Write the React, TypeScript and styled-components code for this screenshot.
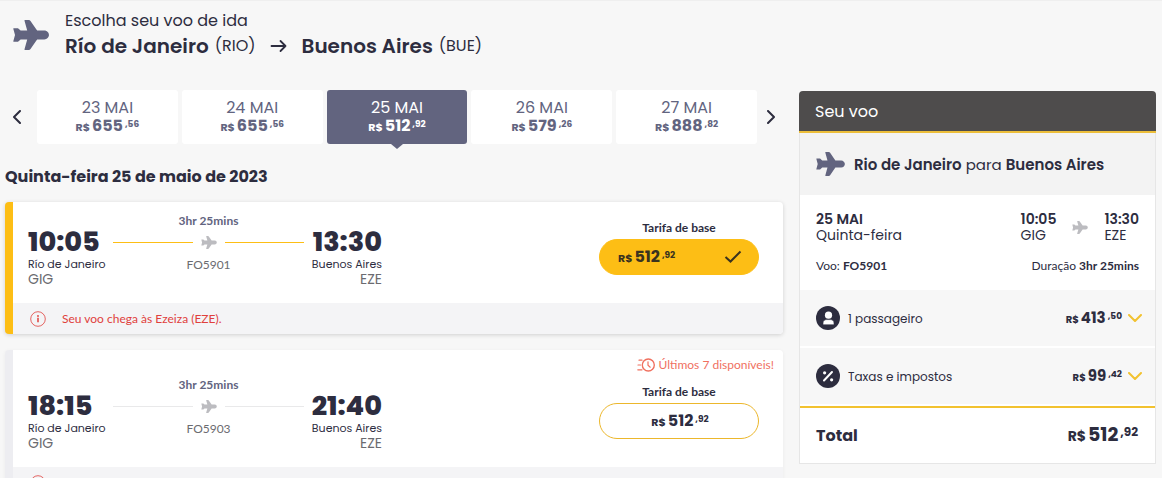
import React from "react";
import styled, { createGlobalStyle, css } from "styled-components";

const color = {
  ink: "#2d2d3f",
  slate: "#62647f",
  grey: "#6b6b70",
  yellow: "#fdbe15",
  red: "#e0403c",
  coral: "#f0705f",
  page: "#f7f7f7",
};

const display = `Poppins, Inter, "Liberation Sans", sans-serif`;
const body = `Lato, "Liberation Sans", sans-serif`;

const GlobalStyle = createGlobalStyle`
  *, *::before, *::after { box-sizing: border-box; }
  html { scrollbar-width: none; }
  body {
    margin: 0;
    background: ${color.page};
    color: ${color.ink};
    font-family: ${display};
  }
  h1, h2, h3, p { margin: 0; }
  button { font-family: inherit; color: inherit; cursor: pointer; border: 0; padding: 0; background: none; }
`;

/* ---------- icons ---------- */

const PlaneIcon = ({ width, fill = color.slate }: { width: number; fill?: string }) => (
  <svg width={width} height={Math.round((width * 91) / 109)} viewBox="0 0 109 91" fill={fill} aria-hidden="true">
    <path d="M36 0H48Q51 0 53 3L73 32H95C103 32 109 39 109 45.500C109 52 103 59 95 59H73L53 88Q51 91 48 91H36Q34 91 35 88L43 59H23L15 66H2Q0 66 1 64L6 45.500L1 27Q0 25 2 25H15L23 32H43L35 3Q34 0 36 0Z" />
  </svg>
);

const ArrowIcon = () => (
  <svg width="17" height="14" viewBox="0 0 17 14" fill="none" stroke={color.ink} strokeWidth="1.800" strokeLinecap="round" strokeLinejoin="round" aria-hidden="true">
    <path d="M1.500 7H15.500M10.500 2L15.500 7L10.500 12" />
  </svg>
);

const ChevronIcon = ({ d, w, h, stroke = color.ink }: { d: string; w: number; h: number; stroke?: string }) => (
  <svg width={w} height={h} viewBox={`0 0 ${w} ${h}`} fill="none" stroke={stroke} strokeWidth="2" strokeLinecap="round" strokeLinejoin="round" aria-hidden="true">
    <path d={d} />
  </svg>
);

const CheckIcon = () => (
  <svg width="18" height="14" viewBox="0 0 18 14" fill="none" stroke="#3a331f" strokeWidth="2" aria-hidden="true">
    <path d="M1.500 7L6.500 11.500L16.500 1.500" />
  </svg>
);

const InfoIcon = () => (
  <svg width="16" height="16" viewBox="0 0 16 16" fill="none" stroke={color.red} aria-hidden="true">
    <circle cx="8" cy="8" r="7.300" strokeWidth="0.800" />
    <path d="M8 6.800V11.200" strokeWidth="1.500" />
    <circle cx="8" cy="5" r="0.900" fill={color.red} stroke="none" />
  </svg>
);

const FastClockIcon = () => (
  <svg width="18" height="14" viewBox="0 0 18 14" fill="none" stroke={color.coral} strokeWidth="1.400" strokeLinecap="round" aria-hidden="true">
    <circle cx="11.300" cy="7" r="6" />
    <path d="M11 3.800V7.300L13.200 9.200M2 2.200H5M1 7H3.500M0.800 11.800H5" strokeWidth="1.200" />
  </svg>
);

const PassengerIcon = () => (
  <svg width="24" height="24" viewBox="0 0 24 24" aria-hidden="true">
    <circle cx="12" cy="12" r="12" fill={color.ink} />
    <circle cx="12.500" cy="9.200" r="3.600" fill="#fff" />
    <path d="M7 18.800V17C7 14.800 8.500 13.600 10.500 13.600H14.500C16.500 13.600 18 14.800 18 17V18.800Z" fill="#fff" stroke={color.ink} strokeWidth="0.600" />
  </svg>
);

const PercentIcon = () => (
  <svg width="24" height="24" viewBox="0 0 24 24" aria-hidden="true">
    <circle cx="12" cy="12" r="12" fill={color.ink} />
    <path d="M8 16.500L16 8" stroke="#fff" strokeWidth="2" strokeLinecap="round" />
    <circle cx="8.600" cy="8.800" r="1.600" fill="#fff" />
    <circle cx="15.600" cy="15.800" r="1.600" fill="#fff" />
  </svg>
);

/* ---------- price ---------- */

type PriceSize = "small" | "medium" | "large";

const priceScale = {
  small: { whole: 15, currency: 10, cents: 9, line: 18, centsLine: 14, top: 2 },
  medium: { whole: 16, currency: 11, cents: 9, line: 18, centsLine: 14, top: 0 },
  large: { whole: 19, currency: 14, cents: 12, line: 24, centsLine: 18, top: 0 },
};

const PriceBox = styled.span<{ $size: PriceSize }>`
  display: inline-flex;
  align-items: baseline;
  gap: 2px;
  padding-top: ${(p) => priceScale[p.$size].top}px;
  font-weight: 700;
  white-space: nowrap;
  font-size: ${(p) => priceScale[p.$size].whole}px;
  line-height: ${(p) => priceScale[p.$size].line}px;
`;

const Currency = styled.small<{ $size: PriceSize }>`
  font-size: ${(p) => priceScale[p.$size].currency}px;
`;

const Cents = styled.small<{ $size: PriceSize }>`
  align-self: flex-start;
  font-size: ${(p) => priceScale[p.$size].cents}px;
  line-height: ${(p) => priceScale[p.$size].centsLine}px;
`;

const Price = ({ whole, cents, size = "medium" }: { whole: string; cents: string; size?: PriceSize }) => (
  <PriceBox $size={size}>
    <Currency $size={size}>R$</Currency>
    <span>{whole}</span>
    <Cents $size={size}>,{cents}</Cents>
  </PriceBox>
);

/* ---------- page header ---------- */

const Page = styled.div`
  border-top: 1px solid #efefef;
  padding: 0 6px 0 5px;
`;

const Header = styled.header`
  display: flex;
  align-items: flex-start;
  gap: 16px;
  padding: 8px 0 31px 8px;

  > svg { margin-top: 11px; }
`;

const Eyebrow = styled.p`
  font-size: 16px;
  line-height: 24px;
`;

const RouteTitle = styled.h1`
  display: flex;
  align-items: center;
  font-size: 20px;
  font-weight: 600;
  line-height: 26px;

  svg { margin: 0 15px 0 14px; }
`;

const AirportCode = styled.span`
  margin-left: 6px;
  font-size: 16px;
  font-weight: 400;
`;

const Columns = styled.div`
  display: flex;
  align-items: flex-start;
  gap: 16px;
`;

const Results = styled.main`
  flex: 1;
  min-width: 0;
`;

/* ---------- date strip ---------- */

const DateStrip = styled.nav`
  display: flex;
  align-items: center;
`;

const StripArrow = styled.button`
  display: flex;
  align-items: center;
  justify-content: center;
  width: 24px;
  height: 52px;
`;

const DateList = styled.div`
  flex: 1;
  display: grid;
  grid-template-columns: repeat(5, 1fr);
  gap: 4px;
  margin: 0 2px 0 8px;
`;

const DateCard = styled.button<{ $active?: boolean }>`
  position: relative;
  display: flex;
  flex-direction: column;
  align-items: center;
  padding: 9px 0 8px;
  border-radius: 3px;
  background: #fff;
  color: ${color.slate};

  ${(p) =>
    p.$active &&
    css`
      background: ${color.slate};
      color: #fff;

      &::after {
        content: "";
        position: absolute;
        top: 100%;
        left: 50%;
        margin-left: -6px;
        border: 6px solid transparent;
        border-top: 5px solid ${color.slate};
        border-bottom: 0;
      }
    `}
`;

const DateLabel = styled.span`
  font-size: 16px;
  line-height: 18px;
`;

const DayHeading = styled.h2`
  padding: 21px 0 13px;
  font-size: 16px;
  font-weight: 700;
  line-height: 24px;
`;

/* ---------- flight card ---------- */

const Card = styled.article<{ $selected?: boolean }>`
  margin-bottom: 16px;
  overflow: hidden;
  border-left: 8px solid ${(p) => (p.$selected ? color.yellow : "#ededf1")};
  border-radius: 4px;
  background: #fff;
  box-shadow: 0 1px 4px rgba(0, 0, 0, ${(p) => (p.$selected ? 0.16 : 0.05)});
`;

const SeatsLeft = styled.p`
  display: flex;
  align-items: center;
  justify-content: flex-end;
  gap: 4px;
  padding: 7px 9px 0 0;
  color: ${color.coral};
  font-family: ${body};
  font-size: 12px;
  line-height: 16px;
`;

const CardBody = styled.div<{ $badge?: boolean }>`
  display: flex;
  align-items: flex-start;
  justify-content: space-between;
  padding: ${(p) => (p.$badge ? 4 : 11)}px 24px 18px 15px;
`;

const Itinerary = styled.div`
  display: grid;
  grid-template-columns: 77px 191px 70px;
  gap: 8px;
`;

const Stop = styled.div<{ $end?: boolean }>`
  display: flex;
  flex-direction: column;
  align-items: ${(p) => (p.$end ? "flex-end" : "flex-start")};
  padding-top: 16px;
  white-space: nowrap;
`;

const StopTime = styled.strong`
  font-size: 27px;
  font-weight: 800;
  line-height: 26px;
`;

const StopCity = styled.span`
  font-size: 11px;
  line-height: 18px;
`;

const StopCode = styled.span`
  color: ${color.grey};
  font-size: 14px;
  line-height: 12px;
`;

const Leg = styled.div`
  display: flex;
  flex-direction: column;
  font-family: ${body};
  text-align: center;
`;

const Duration = styled.strong`
  color: ${color.slate};
  font-size: 12px;
  line-height: 16px;
`;

const LegLine = styled.div<{ $selected?: boolean }>`
  display: flex;
  align-items: center;
  gap: 8px;
  height: 26px;

  &::before,
  &::after {
    content: "";
    flex: 1;
    height: 1px;
    background: ${(p) => (p.$selected ? color.yellow : "#e9e9ea")};
  }
`;

const FlightNumber = styled.span`
  color: ${color.grey};
  font-size: 12px;
  line-height: 20px;
`;

const Fare = styled.div`
  display: flex;
  flex-direction: column;
  gap: 3px;
  width: 160px;
  padding-top: 7px;
`;

const FareLabel = styled.span`
  font-family: ${body};
  font-size: 12px;
  font-weight: 700;
  line-height: 16px;
  text-align: center;
`;

const FareButton = styled.button<{ $selected?: boolean }>`
  display: flex;
  align-items: center;
  justify-content: ${(p) => (p.$selected ? "space-between" : "center")};
  height: 36px;
  padding: 0 16px 0 18px;
  border: 1px solid #ecb72c;
  border-radius: 18px;

  ${(p) =>
    p.$selected &&
    css`
      border-color: ${color.yellow};
      background: ${color.yellow};
      color: #3a331f;
    `}
`;

const Notice = styled.p`
  display: flex;
  align-items: center;
  gap: 16px;
  padding: 8px 17px 7px;
  background: #f4f4f6;
  color: ${color.red};
  font-family: ${body};
  font-size: 12px;
  line-height: 16px;
`;

type Flight = {
  departs: string;
  arrives: string;
  number: string;
  selected?: boolean;
  seats?: string;
};

const FlightCard = ({ departs, arrives, number, selected, seats }: Flight) => (
  <Card $selected={selected}>
    {seats && (
      <SeatsLeft>
        <FastClockIcon />
        {seats}
      </SeatsLeft>
    )}
    <CardBody $badge={Boolean(seats)}>
      <Itinerary>
        <Stop>
          <StopTime>{departs}</StopTime>
          <StopCity>Río de Janeiro</StopCity>
          <StopCode>GIG</StopCode>
        </Stop>
        <Leg>
          <Duration>3hr 25mins</Duration>
          <LegLine $selected={selected}>
            <PlaneIcon width={16} fill="#bcbcc0" />
          </LegLine>
          <FlightNumber>{number}</FlightNumber>
        </Leg>
        <Stop $end>
          <StopTime>{arrives}</StopTime>
          <StopCity>Buenos Aires</StopCity>
          <StopCode>EZE</StopCode>
        </Stop>
      </Itinerary>
      <Fare>
        <FareLabel>Tarifa de base</FareLabel>
        <FareButton type="button" $selected={selected} aria-pressed={Boolean(selected)}>
          <Price whole="512" cents="92" />
          {selected && <CheckIcon />}
        </FareButton>
      </Fare>
    </CardBody>
    <Notice>
      <InfoIcon />
      Seu voo chega às Ezeiza (EZE).
    </Notice>
  </Card>
);

/* ---------- summary ---------- */

const Summary = styled.aside`
  flex: 0 0 357px;
  margin-top: 1px;
`;

const SummaryTitle = styled.h2`
  padding: 9px 16px 7px;
  border-bottom: 2px solid #ecbe3a;
  border-radius: 4px 4px 0 0;
  background: #4e4c4c;
  color: #fff;
  font-size: 16px;
  font-weight: 400;
  line-height: 24px;
`;

const SummaryBody = styled.div`
  border: 1px solid #e6e6e6;
  border-top: 0;
  background: #fff;
`;

const SummaryRoute = styled.p`
  display: flex;
  align-items: center;
  gap: 9px;
  padding: 18px 16px;
  background: #f3f3f3;
  font-size: 15px;
  line-height: 24px;

  span { padding-top: 2px; }
  strong { font-weight: 600; }
`;

const SummaryFlight = styled.div`
  display: grid;
  gap: 14px;
  padding: 16px 16px 15px;
`;

const SummaryLine = styled.div`
  display: flex;
  align-items: center;
  justify-content: space-between;
  font-family: ${body};
  font-size: 12px;
  line-height: 18px;
`;

const SummaryTimes = styled.div`
  display: flex;
  align-items: center;
  gap: 16px;
`;

const SummaryPair = styled.div`
  display: flex;
  flex-direction: column;
  font-family: ${display};
  line-height: 16px;
  font-size: 14px;

  strong { font-weight: 600; }
`;

const ChargeRow = styled.button`
  display: flex;
  align-items: center;
  gap: 6px;
  width: 100%;
  padding: 16px 13px 16px 16px;
  border-bottom: 2px solid #fff;
  background: ${color.page};
`;

const ChargeLabel = styled.span`
  flex: 1;
  padding: 2px 0 0 2px;
  font-size: 12px;
  line-height: 22px;
  text-align: left;
`;

const TotalRow = styled.div`
  display: flex;
  align-items: center;
  justify-content: space-between;
  padding: 15px 17px 15px 16px;
  border-top: 2px solid #f2c230;
  font-size: 16px;
  font-weight: 700;
  line-height: 24px;
`;

const dates = [
  { label: "23 MAI", whole: "655", cents: "56" },
  { label: "24 MAI", whole: "655", cents: "56" },
  { label: "25 MAI", whole: "512", cents: "92", active: true },
  { label: "26 MAI", whole: "579", cents: "26" },
  { label: "27 MAI", whole: "888", cents: "82" },
];

const charges = [
  { label: "1 passageiro", whole: "413", cents: "50", icon: <PassengerIcon /> },
  { label: "Taxas e impostos", whole: "99", cents: "42", icon: <PercentIcon /> },
];

export default function App() {
  return (
    <>
      <GlobalStyle />
      <Page>
        <Header>
          <PlaneIcon width={36} />
          <div>
            <Eyebrow>Escolha seu voo de ida</Eyebrow>
            <RouteTitle>
              Río de Janeiro <AirportCode>(RIO)</AirportCode>
              <ArrowIcon />
              Buenos Aires <AirportCode>(BUE)</AirportCode>
            </RouteTitle>
          </div>
        </Header>
        <Columns>
          <Results>
            <DateStrip>
              <StripArrow type="button" aria-label="Datas anteriores">
                <ChevronIcon w={8} h={14} d="M7 1L1 7L7 13" />
              </StripArrow>
              <DateList>
                {dates.map((d) => (
                  <DateCard key={d.label} type="button" $active={d.active}>
                    <DateLabel>{d.label}</DateLabel>
                    <Price whole={d.whole} cents={d.cents} />
                  </DateCard>
                ))}
              </DateList>
              <StripArrow type="button" aria-label="Próximas datas">
                <ChevronIcon w={8} h={14} d="M1 1L7 7L1 13" />
              </StripArrow>
            </DateStrip>
            <DayHeading>Quinta-feira 25 de maio de 2023</DayHeading>
            <FlightCard departs="10:05" arrives="13:30" number="FO5901" selected />
            <FlightCard departs="18:15" arrives="21:40" number="FO5903" seats="Últimos 7 disponíveis!" />
          </Results>
          <Summary>
            <SummaryTitle>Seu voo</SummaryTitle>
            <SummaryBody>
              <SummaryRoute>
                <PlaneIcon width={29} />
                <span>
                  <strong>Rio de Janeiro</strong> para <strong>Buenos Aires</strong>
                </span>
              </SummaryRoute>
              <SummaryFlight>
                <SummaryLine>
                  <SummaryPair>
                    <strong>25 MAI</strong>
                    <span>Quinta-feira</span>
                  </SummaryPair>
                  <SummaryTimes>
                    <SummaryPair>
                      <strong>10:05</strong>
                      <span>GIG</span>
                    </SummaryPair>
                    <PlaneIcon width={16} fill="#bcbcc0" />
                    <SummaryPair>
                      <strong>13:30</strong>
                      <span>EZE</span>
                    </SummaryPair>
                  </SummaryTimes>
                </SummaryLine>
                <SummaryLine>
                  <span>
                    Voo: <strong>FO5901</strong>
                  </span>
                  <span>
                    Duração <strong>3hr 25mins</strong>
                  </span>
                </SummaryLine>
              </SummaryFlight>
              {charges.map((c) => (
                <ChargeRow key={c.label} type="button" aria-expanded={false}>
                  {c.icon}
                  <ChargeLabel>{c.label}</ChargeLabel>
                  <Price whole={c.whole} cents={c.cents} size="small" />
                  <ChevronIcon w={14} h={8} d="M1 1L7 7L13 1" stroke="#f2c230" />
                </ChargeRow>
              ))}
              <TotalRow>
                <span>Total</span>
                <Price whole="512" cents="92" size="large" />
              </TotalRow>
            </SummaryBody>
          </Summary>
        </Columns>
      </Page>
    </>
  );
}
